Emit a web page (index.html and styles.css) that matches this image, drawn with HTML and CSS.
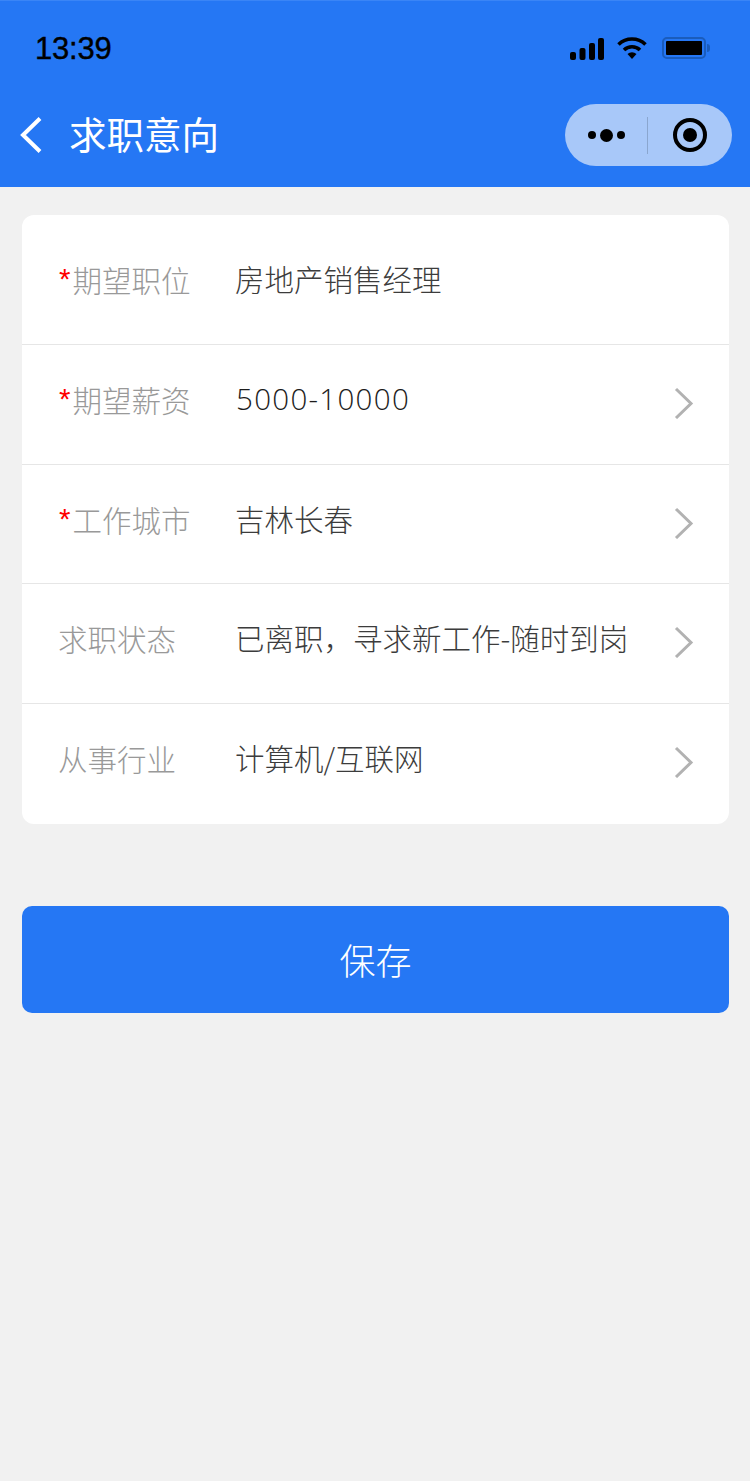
FILE: index.html
```html
<!DOCTYPE html>
<html lang="zh-CN">
<head>
  <meta charset="UTF-8"/>
  <meta name="viewport" content="width=device-width, initial-scale=1"/>
  <title>求职意向</title>
  <link rel="stylesheet" href="styles.css">
</head>
<body>
  <div class="header">
    <div class="status-bar">
      <div class="clock">13:39</div>
      <div class="status-icons">
        <svg class="signal" width="34" height="22" viewBox="0 0 34 22"><rect x="0" y="14" width="6" height="8" rx="2"/><rect x="9.500" y="10" width="6" height="12" rx="2"/><rect x="19" y="5" width="6" height="17" rx="2"/><rect x="28" y="0" width="6" height="22" rx="2"/></svg>
        <svg class="wifi" width="30" height="22" viewBox="0 0 30 22"><path d="M1.500 7.500a19.500 19.500 0 0 1 27 0" fill="none" stroke="#000" stroke-width="3.600"/><path d="M7 13a11.500 11.500 0 0 1 16 0" fill="none" stroke="#000" stroke-width="3.600"/><path d="M10.500 17a6.500 6.500 0 0 1 9 0L15 22z"/></svg>
        <div class="battery"><div class="battery-fill"></div></div>
      </div>
    </div>
    <div class="nav-bar">
      <svg class="back" width="24" height="38" viewBox="0 0 24 38"><path d="M21 2.500L4 19l17 16.500" fill="none" stroke="#fff" stroke-width="4"/></svg>
      <div class="nav-title">求职意向</div>
      <div class="capsule">
        <div class="capsule-more"><i></i><i class="big"></i><i></i></div>
        <div class="capsule-line"></div>
        <div class="capsule-close"><i></i></div>
      </div>
    </div>
  </div>

  <div class="card">
    <div class="row first">
      <div class="label"><span class="star">*</span>期望职位</div>
      <div class="value">房地产销售经理</div>
    </div>
    <div class="row">
      <div class="label"><span class="star">*</span>期望薪资</div>
      <div class="value num">5000-10000</div>
      <svg class="arrow" width="20" height="32" viewBox="0 0 20 32"><path d="M2 2l15 14.500L2 31" fill="none" stroke="#b2b2b2" stroke-width="3"/></svg>
    </div>
    <div class="row">
      <div class="label"><span class="star">*</span>工作城市</div>
      <div class="value">吉林长春</div>
      <svg class="arrow" width="20" height="32" viewBox="0 0 20 32"><path d="M2 2l15 14.500L2 31" fill="none" stroke="#b2b2b2" stroke-width="3"/></svg>
    </div>
    <div class="row">
      <div class="label">求职状态</div>
      <div class="value">已离职，寻求新工作-随时到岗</div>
      <svg class="arrow" width="20" height="32" viewBox="0 0 20 32"><path d="M2 2l15 14.500L2 31" fill="none" stroke="#b2b2b2" stroke-width="3"/></svg>
    </div>
    <div class="row">
      <div class="label">从事行业</div>
      <div class="value">计算机/互联网</div>
      <svg class="arrow" width="20" height="32" viewBox="0 0 20 32"><path d="M2 2l15 14.500L2 31" fill="none" stroke="#b2b2b2" stroke-width="3"/></svg>
    </div>
  </div>

  <button class="save">保存</button>
</body>
</html>
```

FILE: styles.css
```css
*{box-sizing:border-box;margin:0;padding:0;}
body{width:750px;min-height:1481px;background:#f1f1f1;font-family:"Noto Sans CJK SC","Noto Sans",sans-serif;font-weight:300;color:#444;}
.header{height:187px;background:#2577f4;border-top:1px solid #3a85f6;}
.status-bar{display:flex;justify-content:space-between;align-items:center;height:88px;padding:6px 44px 0 35px;}
.clock{margin-top:1px;font-family:"Liberation Sans",sans-serif;font-size:31px;color:#000;letter-spacing:-.2px;-webkit-text-stroke:.4px #000;}
.status-icons{display:flex;align-items:center;gap:13px;}
.signal{display:block;margin-top:1px;}
.wifi{display:block;margin-right:2px;}
.battery{position:relative;width:44px;height:22px;border:2px solid #1a5cbc;border-radius:5px;padding:2px;}
.battery:after{content:"";position:absolute;right:-6px;top:5px;width:3px;height:8px;background:#1a5cbc;border-radius:0 3px 3px 0;}
.battery-fill{height:100%;background:#000;border-radius:1px;}
.nav-bar{display:flex;align-items:center;height:98px;padding:0 18px 6px 19px;}
.back{display:block;}
.nav-title{flex:1;margin-left:26px;padding-bottom:6px;font-size:37.500px;font-weight:400;color:#fff;}
.capsule{display:flex;align-items:center;width:167px;height:62px;background:#a8c8f9;border-radius:31px;}
.capsule-more{display:flex;align-items:center;justify-content:center;gap:4px;width:82px;}
.capsule-more i{display:block;width:8px;height:8px;border-radius:50%;background:#000;}
.capsule-more i.big{width:13px;height:13px;}
.capsule-line{width:1px;height:37px;background:#8aa6cf;}
.capsule-close{display:flex;align-items:center;justify-content:center;flex:1;}
.capsule-close i{display:flex;width:34px;height:34px;border:4px solid #000;border-radius:50%;}
.capsule-close i:after{content:"";width:14px;height:14px;margin:6px;background:#000;border-radius:50%;}
.card{height:609px;margin:28px 21px 0 22px;background:#fff;border-radius:12px;overflow:hidden;}
.row{display:flex;align-items:center;height:119.600px;padding:0 35px 12px 36px;border-top:1px solid #e6e6e6;}
.row.first{height:129px;padding-bottom:3px;border-top:none;}
.label{width:177px;padding-top:2px;font-size:29.500px;color:#999;white-space:nowrap;}
.star{margin:0 2px 0 1px;color:#f00;font-family:"Liberation Sans",sans-serif;vertical-align:3px;line-height:1;}
.value{flex:1;font-size:29.500px;color:#3c3c3c;white-space:nowrap;}
.value.num{padding-left:1px;font-family:"Open Sans",sans-serif;color:#1c1c1c;letter-spacing:1.300px;}
.arrow{display:block;margin-top:10px;}
.save{display:block;width:707px;height:107px;margin:82px 0 0 22px;padding-bottom:2px;background:#2577f4;border:none;border-radius:10px;font:300 36px "Noto Sans CJK SC","Noto Sans",sans-serif;color:#fff;}
```
